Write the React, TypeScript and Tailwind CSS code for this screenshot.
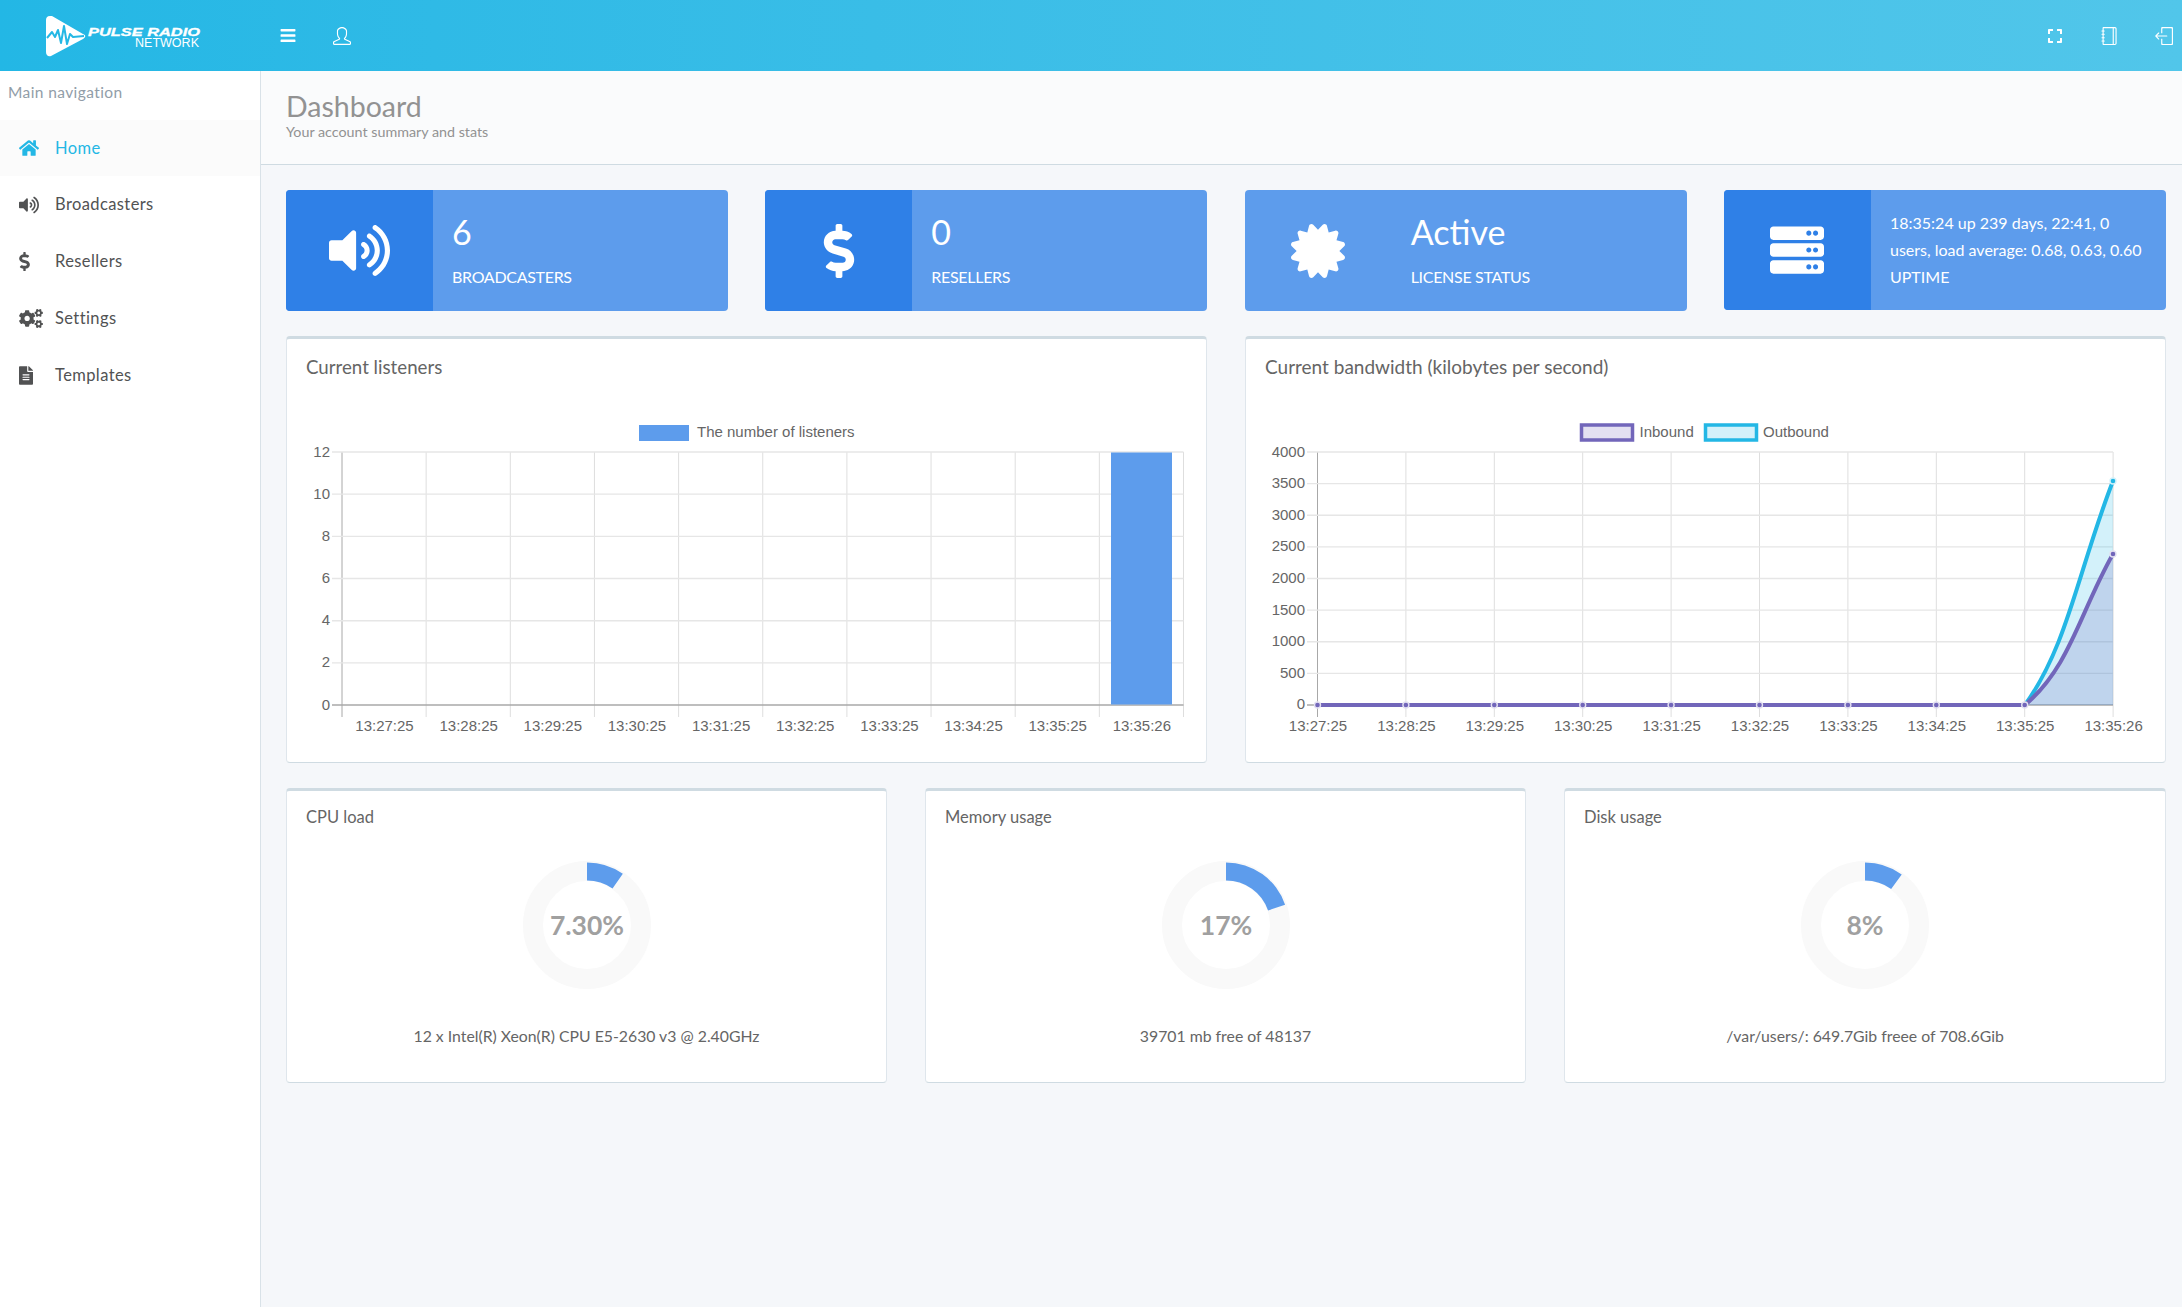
import { FaBars, FaCertificate, FaCogs, FaDollarSign, FaExpand, FaFileAlt, FaHome, FaServer, FaVolumeUp } from 'react-icons/fa';
import { SlLogout, SlNotebook, SlUser } from 'react-icons/sl';

const navItems = [
  { label: 'Broadcasters', icon: <FaVolumeUp className="h-[20px] w-[20px]" /> },
  { label: 'Resellers', icon: <FaDollarSign className="h-[19px] w-[11px]" /> },
  { label: 'Settings', icon: <FaCogs className="h-[19px] w-[24px]" /> },
  { label: 'Templates', icon: <FaFileAlt className="h-[19px] w-[14px]" /> },
];

const Logo = () => (
  <svg width="170" height="44" viewBox="40 13 170 44" className="block">
    <path d="M50 15 C47 15 46 17 46 19 L46 51 C46 54 48 56 51 55 L83 38 C86 36 86 34 83 33 L52 15 Z" fill="#fff" />
    <path d="M47 37 L52 31 L55 36 L58 29 L61 42 L64 25 L67 43 L70 33 L73 36 L84 35" fill="none" stroke="#25b8e5" strokeWidth="2" strokeLinejoin="round" />
    <text x="88" y="35" fill="#fff" stroke="#fff" strokeWidth="0.3" fontFamily="'Liberation Sans', sans-serif" fontStyle="italic" fontWeight="700" fontSize="11.5" textLength="112" lengthAdjust="spacingAndGlyphs">PULSE RADIO</text>
    <text x="135" y="46" fill="#fff" fontFamily="'Liberation Sans', sans-serif" fontSize="12.5" textLength="64" lengthAdjust="spacingAndGlyphs">NETWORK</text>
  </svg>
);

const Header = () => (
  <header className="flex h-[71px] items-center bg-gradient-to-r from-[#23b7e5] to-[#51c6ea] text-white">
    <div className="flex w-[280px] pl-[40px]"><Logo /></div>
    <FaBars className="h-[17px] w-[16px]" />
    <SlUser className="ml-[37px] h-[18px] w-[18px]" />
    <div className="ml-auto flex items-center pr-[9px]">
      <FaExpand className="h-[16px] w-[16px]" />
      <SlNotebook className="ml-[37px] h-[18px] w-[18px]" />
      <SlLogout className="ml-[37px] h-[18px] w-[18px]" />
    </div>
  </header>
);

const Sidebar = () => (
  <aside className="w-[261px] shrink-0 border-r border-[#d9e2e8] bg-white">
    <div className="flex h-[49px] items-center pb-[6px] pl-[8px] text-[15.5px] tracking-[0.4px] text-[#919da8]">Main navigation</div>
    <div className="flex h-[56px] items-center bg-[#fbfbfb] pl-[19px] text-[16.5px] tracking-[0.4px] text-[#23b7e5]">
      <span className="w-[36px]"><FaHome className="h-[20px] w-[20px]" /></span>
      Home
    </div>
    {navItems.map((item) => (
      <div key={item.label} className="flex h-[57px] items-center pl-[19px] text-[16.5px] tracking-[0.4px] text-[#515253]">
        <span className="w-[36px]">{item.icon}</span>
        {item.label}
      </div>
    ))}
  </aside>
);

const StatCard = ({ icon, value, label }: { icon: React.ReactNode; value: string; label: string }) => (
  <div className="flex h-[121px] overflow-hidden rounded-[4px] bg-[#5d9cec] text-white">
    <div className="flex w-[147px] shrink-0 items-center justify-center bg-[#2f80e7]">{icon}</div>
    <div className="pl-[19px]">
      <div className="mt-[19px] text-[34px] leading-[46px]">{value}</div>
      <div className="mt-[10px] text-[16px] leading-[24px] tracking-[-0.3px]">{label}</div>
    </div>
  </div>
);

const listenerX = Array.from({ length: 11 }, (_, i) => 342 + i * 84.15);
const listenerY = [12, 10, 8, 6, 4, 2, 0].map((v, i) => ({ v, y: 452 + i * 42.17 }));
const listenerLabels = ['13:27:25', '13:28:25', '13:29:25', '13:30:25', '13:31:25', '13:32:25', '13:33:25', '13:34:25', '13:35:25', '13:35:26'];

const chartText = { fill: '#666', fontSize: 15, fontFamily: "'Liberation Sans', sans-serif" };

const ListenersChart = () => (
  <svg width="919" height="361" viewBox="287 400 919 361" className="block">
    <rect x="639" y="425" width="50" height="16" fill="#5d9cec" />
    <text x="697" y="437" {...chartText}>The number of listeners</text>
    {listenerX.map((x, i) => (
      <line key={x} x1={x} x2={x} y1={452} y2={717} stroke={i === 0 ? '#a8a8a8' : '#dedede'} strokeWidth="1" />
    ))}
    {listenerY.map(({ v, y }) => (
      <g key={v}>
        <line x1={332} x2={1183.5} y1={y} y2={y} stroke={v === 0 ? '#a8a8a8' : '#e6e6e6'} strokeWidth="1.4" />
        <text x={330} y={y + 4.5} textAnchor="end" {...chartText}>{v}</text>
      </g>
    ))}
    <rect x="1111" y="452.5" width="61" height="252" fill="#5d9cec" />
    {listenerLabels.map((t, i) => (
      <text key={t} x={384.5 + i * 84.15} y={731} textAnchor="middle" {...chartText}>{t}</text>
    ))}
  </svg>
);

const bandX = Array.from({ length: 10 }, (_, i) => 1317.5 + i * 88.4);
const bandY = [4000, 3500, 3000, 2500, 2000, 1500, 1000, 500, 0].map((v, i) => ({ v, y: 452 + i * 31.62 }));
const outCurve = 'M2025 705 C2068 645 2078 571 2113 481';
const inCurve = 'M2025 705 C2070 667 2080 612 2113 554';

const BandwidthChart = () => (
  <svg width="919" height="361" viewBox="1246 400 919 361" className="block">
    <rect x="1581.5" y="425" width="51" height="15" fill="#e3e0f1" stroke="#7266ba" strokeWidth="3.5" />
    <text x="1639.5" y="437" {...chartText}>Inbound</text>
    <rect x="1705.5" y="425" width="51" height="15" fill="#d3f1fa" stroke="#23b7e5" strokeWidth="3.5" />
    <text x="1763" y="437" {...chartText}>Outbound</text>
    {bandX.map((x, i) => (
      <g key={x}>
        <line x1={x} x2={x} y1={452} y2={717} stroke={i === 0 ? '#a8a8a8' : '#dedede'} strokeWidth="1" />
        <text x={x + 0.5} y={731} textAnchor="middle" {...chartText}>{listenerLabels[i]}</text>
      </g>
    ))}
    {bandY.map(({ v, y }) => (
      <g key={v}>
        <line x1={1307} x2={2113} y1={y} y2={y} stroke={v === 0 ? '#a8a8a8' : '#e6e6e6'} strokeWidth="1.4" />
        <text x={1305} y={y + 4.5} textAnchor="end" {...chartText}>{v}</text>
      </g>
    ))}
    <path d={`${outCurve} L2113 705 Z`} fill="rgba(35,183,229,0.2)" />
    <path d={`${inCurve} L2113 705 Z`} fill="rgba(114,102,186,0.2)" />
    <path d={outCurve} fill="none" stroke="#23b7e5" strokeWidth="4" />
    <path d={`M1317.5 705 L2025 705 ${inCurve.slice(10)}`} fill="none" stroke="#7266ba" strokeWidth="4" />
    {bandX.slice(0, 9).map((x) => (
      <circle key={x} cx={x} cy={705} r="3" fill="#7266ba" stroke="#e3e0f1" strokeWidth="1.4" />
    ))}
    <circle cx={2113} cy={481} r="3" fill="#23b7e5" stroke="#d3f1fa" strokeWidth="1.4" />
    <circle cx={2113} cy={554} r="3" fill="#7266ba" stroke="#e3e0f1" strokeWidth="1.4" />
  </svg>
);

const arc = (deg: number) => {
  const a = (deg * Math.PI) / 180;
  const [ro, ri] = [62.5, 44.5];
  const p = (r: number) => `${(64 + r * Math.sin(a)).toFixed(2)} ${(64 - r * Math.cos(a)).toFixed(2)}`;
  return `M64 ${64 - ro} A${ro} ${ro} 0 0 1 ${p(ro)} L${p(ri)} A${ri} ${ri} 0 0 0 64 ${64 - ri} Z`;
};

const Gauge = ({ title, value, angle, caption }: { title: string; value: string; angle: number; caption: string }) => (
  <div className="h-[295px] rounded-[4px] border border-[#dfe6ec] border-y-[#cfdbe2] border-t-[3px] bg-white">
    <div className="pl-[19px] pt-[14px] text-[16.5px] leading-[24px] text-[#656565]">{title}</div>
    <svg width="128" height="128" viewBox="0 0 128 128" className="mx-auto mt-[32px] block">
      <circle cx="64" cy="64" r="54" fill="none" stroke="#f9f9f9" strokeWidth="20" />
      <path d={arc(angle)} fill="#5d9cec" />
      <text x="64" y="74" textAnchor="middle" fill="#a0a0a0" fontSize="26.5" fontWeight="700">{value}</text>
    </svg>
    <div className="mt-[35px] text-center text-[15.8px] leading-[24px] text-[#656565]">{caption}</div>
  </div>
);

export default function App() {
  return (
    <div className="flex h-[1307px] flex-col overflow-hidden font-['Lato','Noto_Sans',sans-serif] text-[#656565]">
      <Header />
      <div className="flex flex-1">
        <Sidebar />
        <main className="flex-1 bg-[#f5f7fa]">
          <div className="h-[94px] border-b border-[#cfdbe2] bg-[#fafbfc] pl-[25px] pt-[18px]">
            <h1 className="text-[28.5px] leading-[34px] text-[#929292]">Dashboard</h1>
            <div className="text-[14.3px] leading-[17px] text-[#929292]">Your account summary and stats</div>
          </div>
          <div className="pl-[25px] pr-[16px] pt-[25px]">
            <div className="grid grid-cols-4 gap-[37.33px]">
              <StatCard icon={<FaVolumeUp className="h-[61px] w-[61px]" />} value="6" label="BROADCASTERS" />
              <StatCard icon={<FaDollarSign className="h-[54px] w-[32px]" />} value="0" label="RESELLERS" />
              <div className="flex h-[121px] overflow-hidden rounded-[4px] bg-[#5d9cec] text-white">
                <div className="flex w-[147px] shrink-0 items-center justify-center"><FaCertificate className="h-[54px] w-[54px]" /></div>
                <div className="pl-[19px]">
                  <div className="mt-[19px] text-[34px] leading-[46px]">Active</div>
                  <div className="mt-[10px] text-[16px] leading-[24px] tracking-[-0.3px]">LICENSE STATUS</div>
                </div>
              </div>
              <div className="flex h-[120px] overflow-hidden rounded-[4px] bg-[#5d9cec] text-white">
                <div className="flex w-[147px] shrink-0 items-center justify-center bg-[#2f80e7]"><FaServer className="h-[54px] w-[54px]" /></div>
                <div className="pl-[19px] pr-[20px] pt-[19px] text-[16px] leading-[27px]">
                  18:35:24 up 239 days, 22:41, 0 users, load average: 0.68, 0.63, 0.60
                  <div>UPTIME</div>
                </div>
              </div>
            </div>
            <div className="mt-[25px] grid grid-cols-[921px_921px] gap-[38px]">
              <div className="h-[427px] rounded-[4px] border border-[#dfe6ec] border-y-[#cfdbe2] border-t-[3px] bg-white">
                <div className="h-[61px] pl-[19px] pt-[14px] text-[18.7px] leading-[28px] text-[#656565]">Current listeners</div>
                <ListenersChart />
              </div>
              <div className="h-[427px] rounded-[4px] border border-[#dfe6ec] border-y-[#cfdbe2] border-t-[3px] bg-white">
                <div className="h-[61px] pl-[19px] pt-[14px] text-[19px] leading-[28px] text-[#656565]">Current bandwidth (kilobytes per second)</div>
                <BandwidthChart />
              </div>
            </div>
            <div className="mt-[25px] grid grid-cols-[601px_601px_602px] gap-[38px]">
              <Gauge title="CPU load" value="7.30%" angle={35} caption="12 x Intel(R) Xeon(R) CPU E5-2630 v3 @ 2.40GHz" />
              <Gauge title="Memory usage" value="17%" angle={71} caption="39701 mb free of 48137" />
              <Gauge title="Disk usage" value="8%" angle={36} caption="/var/users/: 649.7Gib freee of 708.6Gib" />
            </div>
          </div>
        </main>
      </div>
    </div>
  );
}
